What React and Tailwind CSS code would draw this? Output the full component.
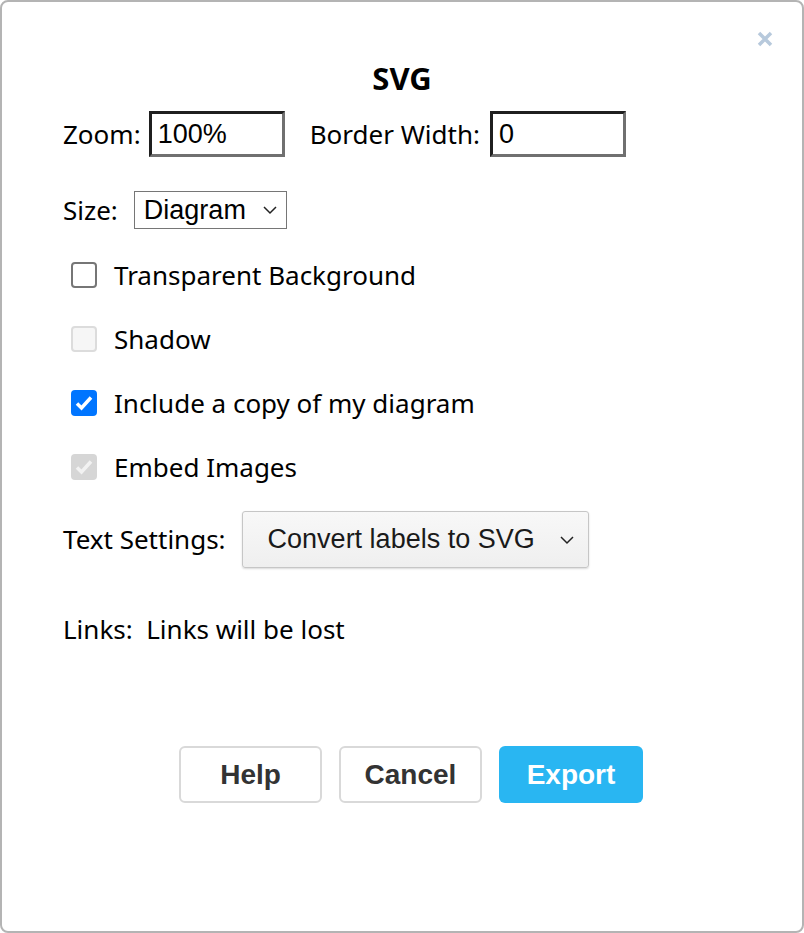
import React from "react";

const label = "font-['Noto_Sans',sans-serif] text-[26px] text-black";
const field = "font-['Liberation_Sans',sans-serif] text-[27px]";

function Check({ state }) {
  if (state === "on") {
    return (
      <div className="w-[26px] h-[26px] rounded-[4px] bg-[#0075ff] flex items-center justify-center">
        <svg width="20" height="20" viewBox="0 0 20 20">
          <path d="M3 10.5 L7.5 15 L17 4.5" fill="none" stroke="white" strokeWidth="3.5" />
        </svg>
      </div>
    );
  }
  if (state === "on-disabled") {
    return (
      <div className="w-[26px] h-[26px] rounded-[4px] bg-[#d6d6d6] flex items-center justify-center">
        <svg width="20" height="20" viewBox="0 0 20 20">
          <path d="M3 10.5 L7.5 15 L17 4.5" fill="none" stroke="#f2f2f2" strokeWidth="3.5" />
        </svg>
      </div>
    );
  }
  if (state === "off-disabled") {
    return <div className="w-[26px] h-[26px] rounded-[4px] border-2 border-[#dcdcdc] bg-[#f6f6f6]" />;
  }
  return <div className="w-[26px] h-[26px] rounded-[4px] border-2 border-[#767676] bg-white" />;
}

function CheckRow({ state, children }) {
  return (
    <div className="flex items-center h-[40px] pl-[8px]">
      <Check state={state} />
      <span className={`${label} ml-[17px]`}>{children}</span>
    </div>
  );
}

function Chevron({ size = 16 }) {
  return (
    <svg width={size} height={size} viewBox="0 0 16 16">
      <path d="M2 5 L8 11 L14 5" fill="none" stroke="#222" strokeWidth="1.5" />
    </svg>
  );
}

export default function App() {
  return (
    <div className="w-[804px] h-[933px] bg-white border-2 border-[#b4b4b4] rounded-[8px] relative">
      <div className="absolute right-[28px] top-[28px] text-[#b7c9dc]">
        <svg width="18" height="18" viewBox="0 0 18 18">
          <path d="M3 3 L15 15 M15 3 L3 15" stroke="currentColor" strokeWidth="3.5" />
        </svg>
      </div>

      <div className="pt-[57px] pl-[61px]">
        <div className="text-center font-['Noto_Sans',sans-serif] font-bold text-[31px] leading-[38px] pr-[61px]">
          SVG
        </div>

        <div className="flex items-center mt-[14px] h-[46px]">
          <span className={label}>Zoom:</span>
          <div className={`ml-[8px] w-[136px] h-[46px] border-[3px] border-t-[#1f1f1f] border-l-[#1f1f1f] border-b-[#707070] border-r-[#707070] flex items-center pl-[6px] ${field}`}>
            100%
          </div>
          <span className={`${label} ml-[25px]`}>Border Width:</span>
          <div className={`ml-[10px] w-[136px] h-[46px] border-[3px] border-t-[#1f1f1f] border-l-[#1f1f1f] border-b-[#707070] border-r-[#707070] flex items-center pl-[6px] ${field}`}>
            0
          </div>
        </div>

        <div className="flex items-center mt-[34px] h-[38px]">
          <span className={label}>Size:</span>
          <div className={`ml-[16px] w-[153px] h-[38px] border border-[#767676] flex items-center pl-[9px] pr-[8px] justify-between ${field}`}>
            Diagram
            <Chevron />
          </div>
        </div>

        <div className="mt-[26px] flex flex-col gap-[24px]">
          <CheckRow state="off">Transparent Background</CheckRow>
          <CheckRow state="off-disabled">Shadow</CheckRow>
          <CheckRow state="on">Include a copy of my diagram</CheckRow>
          <CheckRow state="on-disabled">Embed Images</CheckRow>
        </div>

        <div className="flex items-center mt-[24px] h-[57px]">
          <span className={label}>Text Settings:</span>
          <div className={`ml-[16px] w-[347px] h-[57px] rounded-[3px] border border-[#c6c6c6] bg-gradient-to-b from-[#f8f8f8] to-[#efefef] shadow-[0_1px_2px_rgba(0,0,0,0.15)] flex items-center justify-between pl-[25px] pr-[13px] text-[#1a1a1a] ${field}`}>
            Convert labels to SVG
            <Chevron />
          </div>
        </div>

        <div className={`${label} mt-[45px] leading-[32px]`}>Links:&nbsp; Links will be lost</div>

        <div className="flex gap-[17px] mt-[101px] pl-[116px]">
          <button className="w-[143px] h-[57px] rounded-[6px] border-2 border-[#d9d9d9] bg-white font-['Liberation_Sans',sans-serif] font-bold text-[28px] text-[#333]">
            Help
          </button>
          <button className="w-[143px] h-[57px] rounded-[6px] border-2 border-[#d9d9d9] bg-white font-['Liberation_Sans',sans-serif] font-bold text-[28px] text-[#333]">
            Cancel
          </button>
          <button className="w-[144px] h-[57px] rounded-[6px] bg-[#29b6f2] font-['Liberation_Sans',sans-serif] font-bold text-[28px] text-white">
            Export
          </button>
        </div>
      </div>
    </div>
  );
}
